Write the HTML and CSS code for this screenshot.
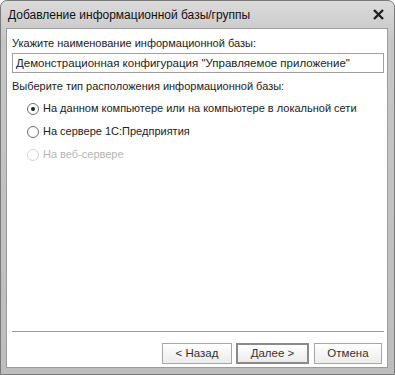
FILE: index.html
```html
<!DOCTYPE html>
<html lang="ru">

<head>
    <meta charset="UTF-8">
    <title>Добавление информационной базы/группы</title>
    <link rel="stylesheet" href="styles.css">
</head>

<body>
    <div class="window">
        <div class="title-bar">
            <span class="title">Добавление информационной базы/группы</span>
            <span class="close-button">
                <svg width="11" height="11" viewBox="0 0 11 11">
                    <path d="M1 1 L10 10 M10 1 L1 10" stroke="#222" stroke-width="2.4" />
                </svg>
            </span>
        </div>
        <div class="client">
            <div class="label first">Укажите наименование информационной базы:</div>
            <div class="text-field">Демонстрационная конфигурация "Управляемое приложение"</div>
            <div class="label">Выберите тип расположения информационной базы:</div>
            <div class="options">
                <div class="option">
                    <span class="radio checked"></span>
                    На данном компьютере или на компьютере в локальной сети
                </div>
                <div class="option">
                    <span class="radio"></span>
                    На сервере 1С:Предприятия
                </div>
                <div class="option disabled">
                    <span class="radio"></span>
                    На веб-сервере
                </div>
            </div>
            <div class="footer">
                <div class="separator"></div>
                <div class="buttons">
                    <span class="button back">&lt; Назад</span>
                    <span class="button default">Далее &gt;</span>
                    <span class="button cancel">Отмена</span>
                </div>
            </div>
        </div>
    </div>
</body>

</html>
```

FILE: styles.css
```css
/* Global Styles */
body {
    margin: 0;
    padding: 0;
    background-color: #fff;
    font-family: 'Liberation Sans', Arial, sans-serif;
    font-size: 11px;
    color: #222;
}

/* Window Frame */
.window {
    width: 395px;
    height: 375px;
    box-sizing: border-box;
    border: 1px solid #7a7a7a;
    border-radius: 7px 7px 0 0;
    background: linear-gradient(#dadada, #c6c6c6 40px, #bdbdbd);
    display: flex;
    flex-direction: column;
}

/* Title Bar */
.title-bar {
    height: 27px;
    display: flex;
    align-items: center;
    justify-content: space-between;
    padding: 0 10px 0 7px;
}

.title {
    font-size: 12px;
    color: #111;
}

.close-button {
    display: flex;
}

/* Client Area */
.client {
    flex: 1;
    margin: 0 6px 6px 5px;
    background-color: #fff;
    border: 1px solid #9c9c9c;
    display: flex;
    flex-direction: column;
    padding: 0 3px 0 5px;
}

.label {
    margin-top: 6px;
    line-height: 14px;
}

.label.first {
    margin-top: 7px;
}

.text-field {
    margin-top: 3px;
    height: 18px;
    line-height: 18px;
    border: 1px solid #a0a0a0;
    padding: 0 3px;
    font-size: 11.5px;
    white-space: nowrap;
    overflow: hidden;
}

/* Radio Options */
.options {
    display: flex;
    flex-direction: column;
    gap: 8px;
    margin-top: 8px;
}

.option {
    display: flex;
    align-items: center;
    gap: 4px;
    padding-left: 15px;
    line-height: 15px;
}

.option.disabled {
    color: #b4b4b4;
}

.radio {
    width: 12px;
    height: 12px;
    box-sizing: border-box;
    border: 1px solid #6e6e6e;
    border-radius: 50%;
    background: #fff;
    display: flex;
    align-items: center;
    justify-content: center;
}

.radio.checked::after {
    content: '';
    width: 4px;
    height: 4px;
    border-radius: 50%;
    background: #222;
}

.option.disabled .radio {
    border-color: #d4d4d4;
}

/* Footer */
.footer {
    margin-top: auto;
    padding-bottom: 3px;
}

.separator {
    height: 1px;
    background-color: #9a9a9a;
    margin-bottom: 11px;
}

.buttons {
    display: flex;
    justify-content: flex-end;
    padding-right: 2px;
}

.button {
    width: 68px;
    height: 19px;
    line-height: 19px;
    text-align: center;
    border: 1px solid #a6a6a6;
    background: linear-gradient(#ffffff, #ececec);
    color: #333;
    font-size: 11.5px;
}

.button.default {
    width: 69px;
    height: 17px;
    line-height: 17px;
    border: 2px solid #8a8a8a;
    margin-left: 4px;
}

.button.cancel {
    width: 66px;
    margin-left: 5px;
}
```
